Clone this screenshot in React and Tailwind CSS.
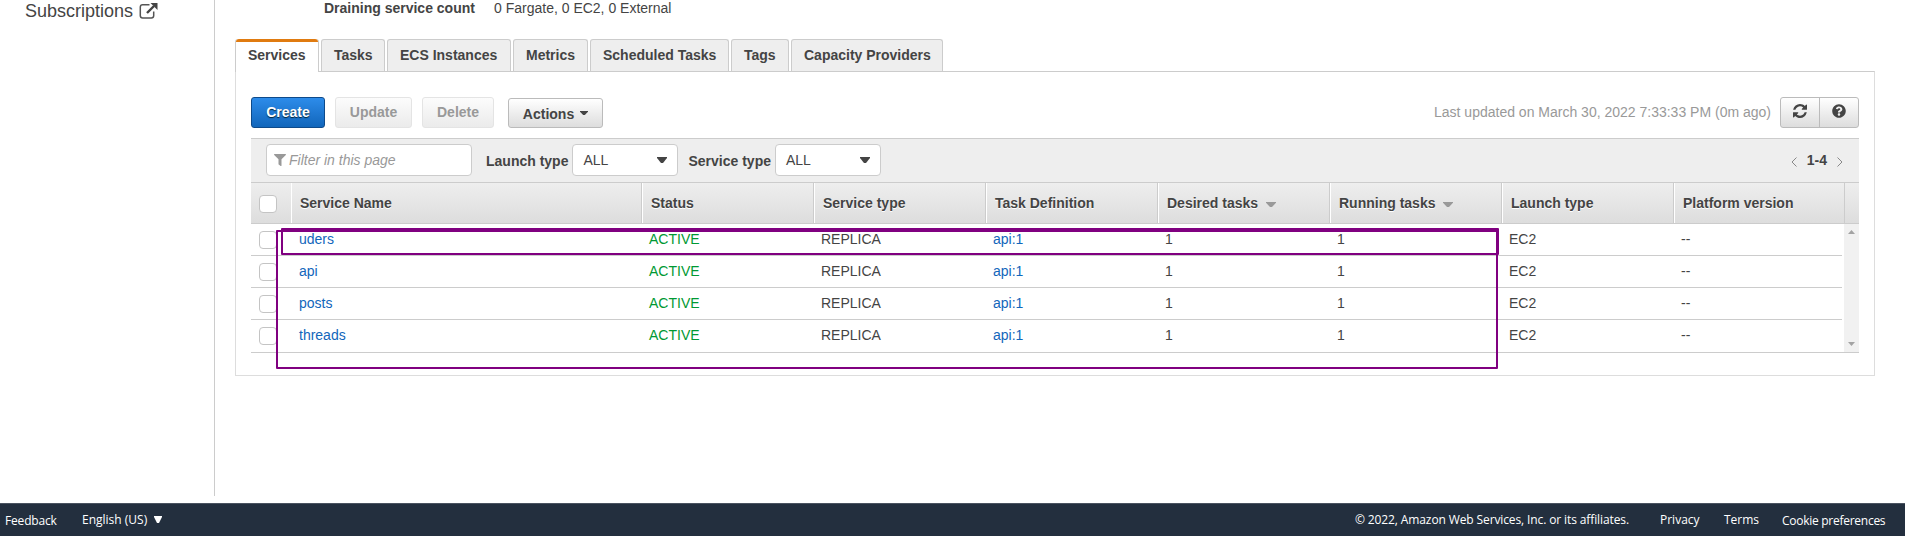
import React from "react";
import { FaFilter, FaQuestionCircle } from "react-icons/fa";

const tabs = [
  ["Tasks", "w-[64px]"],
  ["ECS Instances", "w-[124px]"],
  ["Metrics", "w-[75px]"],
  ["Scheduled Tasks", "w-[139px]"],
  ["Tags", "w-[58px]"],
  ["Capacity Providers", "w-[152px]"],
];

const columns = [
  ["Status"],
  ["Service type"],
  ["Task Definition"],
  ["Desired tasks", true],
  ["Running tasks", true],
  ["Launch type"],
];

const services = ["uders", "api", "posts", "threads"];

function Caret({ className, w = 10, h = 6 }) {
  return (
    <svg className={className} width={w} height={h} viewBox="0 0 10 6" preserveAspectRatio="none">
      <path d="M0 0h10v1L6 6H4L0 1z" fill="currentColor" />
    </svg>
  );
}

function Checkbox() {
  return <span className="ml-2 block size-[18px] shrink-0 rounded-[4px] border border-[#c4c4c4] bg-white" />;
}

function Select({ label, className }) {
  return (
    <div className={`flex items-center ${className}`}>
      <span className="mt-px font-bold">{label}</span>
      <div className="ml-1 flex h-8 w-[106px] items-center justify-between rounded border border-[#ccc] bg-white pr-[10px] pl-[10px]">
        <span>ALL</span>
        <Caret />
      </div>
    </div>
  );
}

function HeaderCell({ children, sortable, className }) {
  return (
    <div className={`flex h-full items-center border-r border-l border-r-[#ccc] border-l-white pl-2 ${className}`}>
      {children}
      {sortable && <Caret className="mt-[2px] ml-[8px] text-[#999]" w={10} h={5} />}
    </div>
  );
}

export default function App() {
  return (
    <div className="relative flex h-[536px] w-[1905px] flex-col overflow-hidden bg-white font-['Liberation_Sans',Arial,sans-serif] text-[14px] leading-[20px] text-[#444]">
      <div className="flex h-[503px]">
        <aside className="h-[496px] w-[215px] border-r border-[#ccc] pl-[25px]">
          <div className="flex items-start text-[18px] leading-[22px]">
            <span>Subscriptions</span>
            <svg className="mt-[2px] ml-[6px]" width="19" height="18" viewBox="0 0 19 18" fill="none">
              <path d="M10.5 2.8H3.6A2.3 2.3 0 0 0 1.3 5v8.8A2.3 2.3 0 0 0 3.6 16h8.800a2.300 2.300 0 0 0 2.300-2.200V9.500" stroke="#555" strokeWidth="1.5" />
              <path d="M8 11l7-7" stroke="#444" strokeWidth="2.4" />
              <path d="M11.5 1H18.5V8z" fill="#444" />
            </svg>
          </div>
        </aside>
        <main className="ml-5 w-[1640px]">
          <div className="flex h-[39px] pl-[89px]">
            <b className="-mt-[2px] w-[170px]">Draining service count</b>
            <span className="-mt-[2px]">0 Fargate, 0 EC2, 0 External</span>
          </div>
          <nav className="relative z-10 flex h-[33px] gap-[2px] font-bold">
            <div className="flex h-[33px] w-[84px] flex-col rounded-t-[3px] border-x border-[#ccc] bg-white">
              <div className="h-[3px] w-full shrink-0 rounded-t-[3px] bg-[#e07b10]" />
              <span className="mt-[3px] ml-3">Services</span>
            </div>
            {tabs.map(([name, width]) => (
              <div key={name} className={`flex h-8 rounded-t-[3px] border border-b-0 border-[#ccc] bg-[#eee] pt-[5px] pl-3 whitespace-nowrap ${width}`}>
                {name}
              </div>
            ))}
          </nav>
          <section className="-mt-px h-[305px] border border-[#ddd] border-t-[#ccc] px-[15px] pt-[25px]">
            <div className="flex h-[31px] font-bold">
              <div className="flex w-[74px] items-center justify-center rounded-[3px] border border-[#0e4a8a] bg-linear-to-b from-[#2d8cea] to-[#1166bb] pb-px text-white [text-shadow:0_1px_1px_#023]">Create</div>
              <div className="ml-[10px] flex w-[77px] items-center justify-center rounded-[3px] border border-[#e4e4e4] bg-linear-to-b from-[#fcfcfc] to-[#ebebeb] pb-px text-[#999]">Update</div>
              <div className="ml-[10px] flex w-[72px] items-center justify-center rounded-[3px] border border-[#e4e4e4] bg-linear-to-b from-[#fcfcfc] to-[#ebebeb] pb-px text-[#999]">Delete</div>
              <div className="mt-px ml-[14px] flex w-[95px] items-center justify-center rounded-[3px] border border-[#bbb] bg-linear-to-b from-white to-[#ddd] pt-px">
                Actions
                <Caret className="mb-[2px] ml-[6px]" w={8} h={4} />
              </div>
              <span className="mt-[5px] ml-auto font-normal text-[#999]">Last updated on March 30, 2022 7:33:33 PM (0m ago)</span>
              <div className="ml-[9px] flex w-[79px] rounded-[3px] border border-[#bbb] bg-linear-to-b from-white to-[#ddd]">
                <div className="flex w-[39px] items-center justify-center border-r border-[#bbb] pb-[3px]">
                  <svg width="14" height="14" viewBox="0 0 1536 1536" fill="#444">
                    <path d="M1511 928q0 5-1 7-64 268-268 434.500T764 1536q-146 0-282.500-55T238 1324l-129 129q-19 19-45 19t-45-19-19-45V960q0-26 19-45t45-19h448q26 0 45 19t19 45-19 45l-137 137q71 66 161 102t187 36q134 0 250-65t186-179q11-17 53-117 8-23 30-23h192q13 0 22.500 9.500t9.500 22.500zm25-800v448q0 26-19 45t-45 19h-448q-26 0-45-19t-19-45 19-45l138-138Q969 256 768 256q-134 0-250 65T332 500q-11 17-53 117-8 23-30 23H50q-13 0-22.500-9.500T18 608v-7q65-268 270-434.500T768 0q146 0 284 55.500T1297 212l130-129q19-19 45-19t45 19 19 45z" />
                  </svg>
                </div>
                <div className="flex flex-1 items-center justify-center pb-[3px]">
                  <FaQuestionCircle size={14} />
                </div>
              </div>
            </div>

            <div className="mt-[10px]">
              <div className="flex h-11 items-start border-t border-[#ccc] bg-[#eee] pt-[5px] pl-[15px]">
                <div className="flex h-8 w-[206px] items-center rounded border border-[#ccc] bg-white pl-[7px] text-[#999] italic">
                  <FaFilter size={12} className="mb-px" />
                  <span className="ml-[3px]">Filter in this page</span>
                </div>
                <Select label="Launch type" className="ml-[14px]" />
                <Select label="Service type" className="ml-[10px]" />
                <div className="mt-[6px] mr-[15px] ml-auto flex items-center font-bold">
                  <svg width="8" height="10" viewBox="0 0 8 10" className="mt-[3px] mr-[9px]" fill="none" stroke="#888"><path d="M6.500 .5L2 5l4.500 4.500" /></svg>
                  1-4
                  <svg width="8" height="10" viewBox="0 0 8 10" className="mt-[3px] ml-[9px]" fill="none" stroke="#888"><path d="M1.500 .5L6 5l-4.500 4.500" /></svg>
                </div>
              </div>
              <div className="flex h-[42px] items-center border-y border-[#ccc] bg-linear-to-b from-[#eee] to-[#ddd] font-bold [text-shadow:0_1px_0_#fff]">
                <div className="w-10 pt-[2px]"><Checkbox /></div>
                <HeaderCell className="w-[351px]">Service Name</HeaderCell>
                {columns.map(([name, sortable]) => (
                  <HeaderCell key={name} sortable={sortable} className="w-[172px]">{name}</HeaderCell>
                ))}
                <HeaderCell className="w-[171px]">Platform version</HeaderCell>
              </div>
              <div className="flex h-[129px] justify-between border-b border-[#ccc]">
                <div className="w-[1591px]">
                  {services.map((name) => (
                    <div key={name} className="flex h-8 border-b border-[#ccc] pt-[5px] last:border-b-0">
                      <div className="w-12 pt-[2px]"><Checkbox /></div>
                      <span className="w-[350px] text-[#1166bb]">{name}</span>
                      <span className="w-[172px] text-[#009933]">ACTIVE</span>
                      <span className="w-[172px]">REPLICA</span>
                      <span className="w-[172px] text-[#1166bb]">api:1</span>
                      <span className="w-[172px]">1</span>
                      <span className="w-[172px]">1</span>
                      <span className="w-[172px]">EC2</span>
                      <span>--</span>
                    </div>
                  ))}
                </div>
                <div className="flex w-[15px] flex-col items-center justify-between bg-[#f1f1f1] pt-[6px] pb-[6px] text-[#a3a3a3]">
                  <svg width="7" height="4" viewBox="0 0 7 4"><path d="M0 4h7L3.500 0z" fill="currentColor" /></svg>
                  <svg width="7" height="4" viewBox="0 0 7 4"><path d="M0 0h7L3.500 4z" fill="currentColor" /></svg>
                </div>
              </div>
            </div>
          </section>
        </main>
      </div>

      <div className="absolute top-[230px] left-[276px] z-20 h-[139px] w-[1222px] rounded-[1px] border-2 border-[#800080]" />
      <div className="absolute top-[228px] left-[281px] z-20 h-[27px] w-[1218px] rounded-[1px] border-2 border-t-4 border-[#800080]" />

      <footer className="flex h-[33px] border-t border-[#4a5360] bg-[#232f3e] pt-[6px] font-['Open_Sans','Noto_Sans',sans-serif] text-[12px] leading-[20px] whitespace-nowrap text-white">
        <span className="mt-px ml-[5px] w-[77px] tracking-[-0.17px]">Feedback</span>
        <span className="w-[66px]">English (US)</span>
        <svg className="mt-[6px] ml-[6px]" width="8" height="7" viewBox="0 0 8 7"><path d="M0 0h8v1L5 7H3L0 1z" fill="currentColor" /></svg>
        <span className="ml-auto w-[305px] tracking-[-0.115px]">© 2022, Amazon Web Services, Inc. or its affiliates.</span>
        <span className="w-[64px]">Privacy</span>
        <span className="w-[58px]">Terms</span>
        <span className="mt-px w-[123px] tracking-[-0.27px]">Cookie preferences</span>
      </footer>
    </div>
  );
}
